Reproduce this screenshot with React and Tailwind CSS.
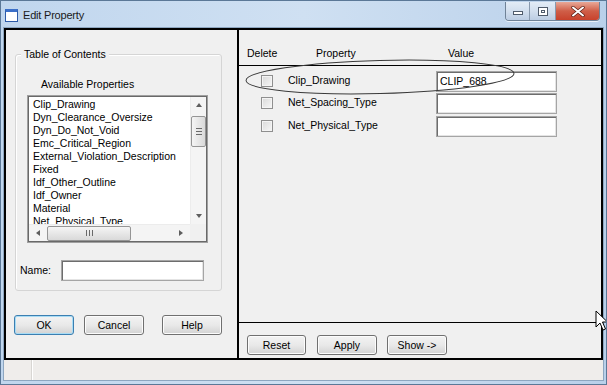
import React from 'react';

const items = [
  'Clip_Drawing',
  'Dyn_Clearance_Oversize',
  'Dyn_Do_Not_Void',
  'Emc_Critical_Region',
  'External_Violation_Description',
  'Fixed',
  'Idf_Other_Outline',
  'Idf_Owner',
  'Material',
  'Net_Physical_Type',
];

const rows = [
  { name: 'Clip_Drawing', value: 'CLIP_688' },
  { name: 'Net_Spacing_Type', value: '' },
  { name: 'Net_Physical_Type', value: '' },
];

function Btn({ label, focused, w = 'w-[60px]' }) {
  return (
    <button
      className={`${w} h-[20px] rounded-[3px] border ${
        focused
          ? 'border-[#3c7fb1] shadow-[inset_0_0_0_1px_#a8dcf5]'
          : 'border-[#707070] shadow-[inset_0_0_0_1px_#fcfcfc]'
      } bg-gradient-to-b from-[#f3f3f3] via-[#e9e9e9] to-[#d3d3d3] text-[10.5px] leading-[18px] text-black`}
    >
      {label}
    </button>
  );
}

function Field({ w, value }) {
  return (
    <div
      className={`${w} h-[21px] bg-white border border-[#a5a5a5] shadow-[inset_1px_1px_0_#6d6d6d,inset_-1px_-1px_0_#e4e4e4] px-[3px] text-[10.5px] leading-[19px] text-black`}
    >
      {value}
    </div>
  );
}

function Tri({ dir }) {
  const pts = {
    up: '1,5 4,1 7,5',
    down: '1,1 4,5 7,1',
    left: '5,1 1,4 5,7',
    right: '1,1 5,4 1,7',
  }[dir];
  const vert = dir === 'up' || dir === 'down';
  return (
    <svg width={vert ? 8 : 6} height={vert ? 6 : 8} viewBox={vert ? '0 0 8 6' : '0 0 6 8'}>
      <polygon points={pts} fill="#5e5e5e" />
    </svg>
  );
}

function CaptionButtons() {
  return (
    <div className="flex self-start mt-[1px] mr-[6px] h-[19px] rounded-b-[4px] border border-t-0 border-[#6f8297] overflow-hidden shadow-[0_1px_0_#e9f1fa]">
      <div className="w-[24px] flex items-center justify-center bg-gradient-to-b from-[#e3ecf6] via-[#d2dfee] to-[#bccde3] border-r border-[#8899ad]">
        <div className="w-[10px] h-[4px] border border-[#4f5b6b] bg-white mt-[4px]" />
      </div>
      <div className="w-[26px] flex items-center justify-center bg-gradient-to-b from-[#e3ecf6] via-[#d2dfee] to-[#bccde3] border-r border-[#8899ad]">
        <div className="w-[10px] h-[9px] border border-[#4f5b6b] bg-white flex items-center justify-center">
          <div className="w-[4px] h-[3px] border border-[#4f5b6b]" />
        </div>
      </div>
      <div className="w-[43px] flex items-center justify-center bg-gradient-to-b from-[#e8a897] via-[#cf5e48] to-[#c8412b]">
        <svg width="14" height="11" viewBox="0 0 14 11">
          <path d="M2 1.5 L12 9.5 M12 1.5 L2 9.5" stroke="#5a1e14" strokeWidth="3.4" strokeLinecap="round" />
          <path d="M2 1.5 L12 9.5 M12 1.5 L2 9.5" stroke="#ffffff" strokeWidth="2" strokeLinecap="round" />
        </svg>
      </div>
    </div>
  );
}

export default function App() {
  return (
    <div className="relative w-[607px] h-[385px] overflow-hidden flex flex-col bg-gradient-to-r from-[#c0d6ee] via-[#cfe0f2] to-[#b9d0ea] border border-[#5b7897] font-['Liberation_Sans',Arial,sans-serif] text-black">
      {/* title bar */}
      <div className="h-[26px] flex justify-between">
        <div className="flex items-center pl-[4px] pt-[2px]">
          <div className="w-[13px] h-[13px] border border-[#2c5aa8] bg-white border-t-[3px] border-t-[#3b6fc8]" />
          <span className="ml-[5px] text-[11px] tracking-[-0.2px] text-[#1a1a1a]">Edit Property</span>
        </div>
        <CaptionButtons />
      </div>

      {/* body */}
      <div className="mx-[2px] flex-1 flex flex-col bg-[#f0f0f0] border border-[#8da6c0]">
        <div className="h-[332px] flex border-2 border-black">
          {/* left panel */}
          <div className="w-[233px] border-r-2 border-black flex flex-col">
            <div className="ml-[9px] mt-[24px] w-[207px] h-[237px] border border-[#d5d5d5] rounded-[3px] shadow-[inset_1px_1px_0_#ffffff]">
              <div className="-mt-[7px] ml-[5px] px-[3px] w-fit bg-[#f0f0f0] text-[10.5px] leading-[13px]">
                Table of Contents
              </div>
              <div className="mt-[17px] pl-[25px] text-[10.5px] leading-[13px]">Available Properties</div>
              <div className="mt-[4px] ml-[11px] w-[181px] h-[148px] border border-[#a0a0a0] flex flex-col">
                <div className="flex-1 border border-[#696969] flex flex-col bg-white">
                  <div className="flex h-[127px]">
                    <div className="flex-1 overflow-hidden pl-[4px] pt-[1px]">
                      {items.map((t) => (
                        <div key={t} className="text-[10.5px] leading-[13px] whitespace-nowrap">
                          {t}
                        </div>
                      ))}
                    </div>
                    <div className="w-[16px] bg-[#f4f4f4] flex flex-col items-center border-l border-[#ececec]">
                      <div className="h-[16px] flex items-center justify-center">
                        <Tri dir="up" />
                      </div>
                      <div className="mt-[3px] w-[15px] h-[31px] rounded-[2px] border border-[#959595] bg-gradient-to-r from-[#f5f5f5] to-[#d9d9d9] flex flex-col items-center justify-center gap-[2px]">
                        <div className="w-[6px] h-[1px] bg-[#6a6a6a]" />
                        <div className="w-[6px] h-[1px] bg-[#6a6a6a]" />
                        <div className="w-[6px] h-[1px] bg-[#6a6a6a]" />
                      </div>
                      <div className="flex-1" />
                      <div className="h-[16px] flex items-center justify-center">
                        <Tri dir="down" />
                      </div>
                    </div>
                  </div>
                  <div className="flex h-[17px]">
                    <div className="flex-1 bg-[#f4f4f4] flex items-center border-t border-[#ececec]">
                      <div className="w-[18px] flex justify-center">
                        <Tri dir="left" />
                      </div>
                      <div className="w-[84px] h-[15px] rounded-[2px] border border-[#959595] bg-gradient-to-b from-[#f5f5f5] to-[#d9d9d9] flex items-center justify-center gap-[2px]">
                        <div className="w-[1px] h-[6px] bg-[#6a6a6a]" />
                        <div className="w-[1px] h-[6px] bg-[#6a6a6a]" />
                        <div className="w-[1px] h-[6px] bg-[#6a6a6a]" />
                      </div>
                      <div className="flex-1" />
                      <div className="w-[18px] flex justify-center">
                        <Tri dir="right" />
                      </div>
                    </div>
                    <div className="w-[16px] bg-[#f0f0f0]" />
                  </div>
                </div>
              </div>
              <div className="mt-[17px] ml-[4px] flex items-center">
                <span className="w-[41px] text-[10.5px]">Name:</span>
                <Field w="w-[143px]" value="" />
              </div>
            </div>
            <div className="mt-[24px] ml-[8px] flex">
              <Btn label="OK" focused />
              <div className="w-[10px]" />
              <Btn label="Cancel" />
              <div className="w-[18px]" />
              <Btn label="Help" />
            </div>
          </div>

          {/* right panel */}
          <div className="flex-1 flex flex-col">
            <div className="h-[36px] border-b border-black flex items-end pb-[5px] text-[10.5px] leading-[13px]">
              <span className="ml-[8px] w-[69px]">Delete</span>
              <span className="w-[132px]">Property</span>
              <span>Value</span>
            </div>
            <div className="flex-1">
              {rows.map((r, i) => (
                <div key={r.name} className={`flex items-center h-[22px] ${i === 0 ? 'mt-[4px]' : ''} ${i === 2 ? 'mt-[1px]' : ''}`}>
                  <div className="ml-[22px] w-[12px] h-[12px] border border-[#8f8f8f] bg-gradient-to-br from-[#d9d9d9] to-[#f7f7f7] shadow-[inset_0_0_0_1px_#f4f4f4]" />
                  <span className="ml-[15px] w-[148px] text-[10.5px]">{r.name}</span>
                  <Field w="w-[121px]" value={r.value} />
                </div>
              ))}
            </div>
            <div className="h-[36px] border-t border-black flex pt-[12px]">
              <div className="ml-[8px] flex">
                <Btn label="Reset" w="w-[59px]" />
                <div className="w-[11px]" />
                <Btn label="Apply" />
                <div className="w-[10px]" />
                <Btn label="Show ->" />
              </div>
            </div>
          </div>
        </div>

        {/* status bar */}
        <div className="flex-1 flex bg-[#efedeb]">
          <div className="w-[28px] border-r border-[#d8d6d3] shadow-[1px_0_0_#ffffff]" />
          <div className="flex-1" />
        </div>
      </div>
      <div className="h-[3px]" />

      {/* annotation ellipse */}
      <svg className="absolute left-[240px] top-[52px]" width="284" height="48" viewBox="0 0 284 48">
        <ellipse cx="139" cy="24" rx="134" ry="16.5" fill="none" stroke="#3a3a3a" strokeWidth="1" transform="rotate(-1.5 139 24)" />
      </svg>

      {/* mouse cursor */}
      <svg className="absolute left-[594px] top-[309px]" width="13" height="21" viewBox="0 0 13 21">
        <path d="M1 1 L1 17 L5 13 L8 20 L10.5 19 L7.5 12 L12.5 12 Z" fill="#ffffff" stroke="#000000" strokeWidth="1" strokeLinejoin="round" />
      </svg>
    </div>
  );
}
